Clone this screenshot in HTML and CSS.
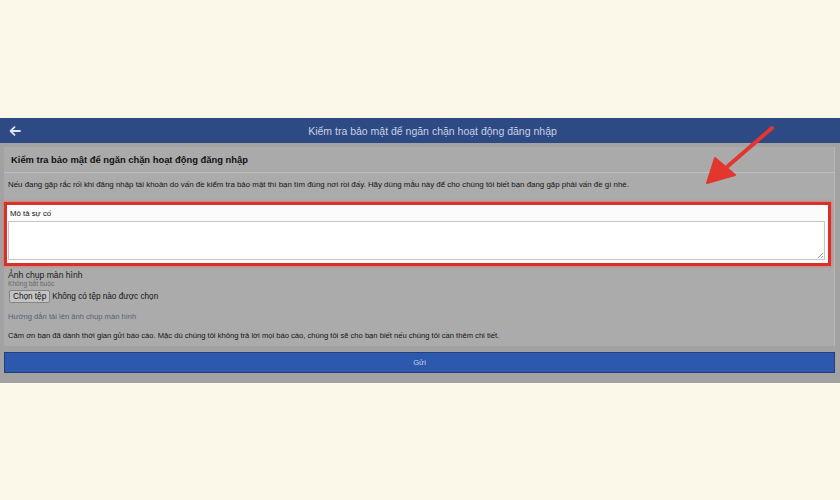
FILE: index.html
```html
<!DOCTYPE html>
<html lang="vi">
<head>
<meta charset="utf-8">
<title>Kiểm tra bảo mật</title>
<link rel="stylesheet" href="styles.css">
</head>
<body>
<div class="page">
  <div class="shot">
    <header class="topbar">
      <span class="back">
        <svg width="12" height="10" viewBox="0 0 12 10"><path d="M11 5H2M5.5 1.2L1.6 5l3.9 3.8" fill="none" stroke="#dfe5f2" stroke-width="1.8" stroke-linecap="round" stroke-linejoin="round"/></svg>
      </span>
      <span class="top-title">Kiểm tra bảo mật để ngăn chặn hoạt động đăng nhập</span>
    </header>
    <main class="content">
      <section class="card">
        <h1 class="card-title">Kiểm tra bảo mật để ngăn chặn hoạt động đăng nhập</h1>
        <p class="intro">Nếu đang gặp rắc rối khi đăng nhập tài khoản do vấn đề kiểm tra bảo mật thì bạn tìm đúng nơi rồi đấy. Hãy dùng mẫu này để cho chúng tôi biết bạn đang gặp phải vấn đề gì nhé.</p>
        <div class="field highlight">
          <label class="field-label">Mô tả sự cố</label>
          <div class="textarea"><span class="grip"></span></div>
        </div>
        <div class="upload">
          <div class="up-title">Ảnh chụp màn hình</div>
          <div class="up-sub">Không bắt buộc</div>
          <div class="file-row"><span class="file-btn">Chọn tệp</span><span class="file-none">Không có tệp nào được chọn</span></div>
        </div>
        <p class="guide">Hướng dẫn tải lên ảnh chụp màn hình</p>
        <p class="thanks">Cảm ơn bạn đã dành thời gian gửi báo cáo. Mặc dù chúng tôi không trả lời mọi báo cáo, chúng tôi sẽ cho bạn biết nếu chúng tôi cần thêm chi tiết.</p>
      </section>
      <div class="submit">Gửi</div>
    </main>
    <svg class="annot" width="80" height="70" viewBox="0 0 80 70">
      <path d="M70 7L26 45" stroke="#e2362f" stroke-width="4" stroke-linecap="round"/>
      <path d="M5 62L13 37L33 54Z" fill="#e2362f" stroke="#e2362f" stroke-width="2" stroke-linejoin="round"/>
    </svg>
  </div>
</div>
</body>
</html>
```
FILE: styles.css
```css
html, body {
  margin: 0;
  padding: 0;
}
body {
  background: #fbf8ea;
  font-family: "Liberation Sans", Arial, Helvetica, sans-serif;
  width: 840px;
  height: 500px;
  overflow: hidden;
}
.page {
  padding-top: 118px;
}
.shot {
  position: relative;
  width: 840px;
}
.topbar {
  height: 25px;
  background: #2d4a84;
  display: flex;
  align-items: center;
}
.back {
  width: 20px;
  padding-left: 9px;
  display: flex;
  align-items: center;
}
.top-title {
  flex: 1;
  text-align: center;
  color: #c9d1e3;
  font-size: 10.5px;
  padding-right: 4px;
}
.content {
  background: #a2a2a2;
  padding: 4px 5px 10px 4px;
}
.card {
  background: #ababab;
  border-right: 1px solid #b6b6b6;
  padding-bottom: 5px;
}
.card-title {
  margin: 0;
  height: 25px;
  line-height: 25px;
  font-size: 9.4px;
  font-weight: bold;
  color: #111;
  padding-left: 7px;
  border-bottom: 1px solid #bdbdbd;
  background: #aaaaaa;
}
.intro {
  margin: 0;
  height: 22px;
  line-height: 23px;
  font-size: 7.9px;
  color: #151515;
  padding-left: 4px;
  white-space: nowrap;
}
.highlight {
  margin-top: 7px;
  width: 818px;
  height: 58px;
  border: 3px solid #d7312b;
  box-shadow: 0 0 2px 1px rgba(240, 110, 100, 0.7);
  background: #fbfbfb;
  padding: 0 2px 0 1px;
}
.field-label {
  display: block;
  font-size: 7.8px;
  color: #111;
  padding: 4px 0 0 2px;
  height: 11px;
}
.textarea {
  position: relative;
  margin-top: 1px;
  height: 37px;
  border: 1px solid #c6c6c6;
  background: #ffffff;
  margin-right: 1px;
}
.grip {
  position: absolute;
  right: 1px;
  bottom: 1px;
  width: 5px;
  height: 5px;
  background: linear-gradient(135deg, transparent 45%, #9a9a9a 46%, #9a9a9a 55%, transparent 56%, transparent 70%, #9a9a9a 71%, #9a9a9a 80%, transparent 81%);
}
.upload {
  padding: 4px 0 0 4px;
}
.up-title {
  font-size: 8.6px;
  color: #1a1a1a;
  line-height: 10px;
}
.up-sub {
  font-size: 6.6px;
  color: #6a6a6a;
  line-height: 8px;
}
.file-row {
  display: flex;
  align-items: center;
  margin-top: 2px;
}
.file-btn {
  height: 11px;
  line-height: 11px;
  padding: 0 3px;
  font-size: 8.2px;
  color: #111;
  background: #c4c4c4;
  border: 1px solid #858585;
  border-radius: 2px;
  margin-left: 1px;
}
.file-none {
  font-size: 8.2px;
  color: #151515;
  margin-left: 2px;
}
.guide {
  margin: 9px 0 0 4px;
  font-size: 7.6px;
  color: #56617c;
  line-height: 10px;
}
.thanks {
  margin: 9px 0 0 4px;
  font-size: 7.6px;
  color: #141414;
  line-height: 10px;
  white-space: nowrap;
}
.submit {
  margin-top: 6px;
  height: 19px;
  line-height: 19px;
  background: #2c58ad;
  border: 1px solid #233f7c;
  text-align: center;
  color: #cdd6ea;
  font-size: 7.6px;
}
.annot {
  position: absolute;
  left: 702px;
  top: 3px;
}
```
